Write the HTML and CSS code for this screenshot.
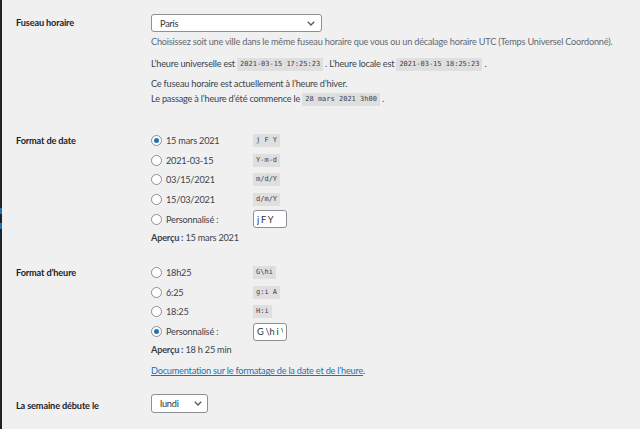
FILE: index.html
```html
<!DOCTYPE html>
<html lang="fr">
<head>
<meta charset="utf-8">
<title>Réglages généraux</title>
<link rel="stylesheet" href="styles.css">
</head>
<body>
<div class="page">
  <div class="menu-edge"><span class="cur cur-a"></span><span class="cur cur-b"></span></div>
  <form class="settings">
    <div class="row row-tz">
      <div class="th th-tz">Fuseau horaire</div>
      <div class="td">
        <div class="select select-tz"><span>Paris</span><svg class="chev" viewBox="0 0 8 5" width="8" height="5"><path d="M0.8 0.8 L4 4 L7.2 0.8" /></svg></div>
        <p class="description d1">Choisissez soit une ville dans le même fuseau horaire que vous ou un décalage horaire UTC (Temps Universel Coordonné).</p>
        <p class="info i1">L’heure universelle est <code>2021-03-15 17:25:23</code>. L’heure locale est <code>2021-03-15 18:25:23</code>.</p>
        <p class="info i2">Ce fuseau horaire est actuellement à l’heure d’hiver.<br>Le passage à l’heure d’été commence le <code>28 mars 2021 3h00</code>.</p>
      </div>
    </div>

    <div class="row row-date">
      <div class="th th-opt">Format de date</div>
      <div class="td">
        <div class="opt"><span class="radio checked"></span><span class="opt-text">15 mars 2021</span><code>j F Y</code></div>
        <div class="opt"><span class="radio"></span><span class="opt-text">2021-03-15</span><code>Y-m-d</code></div>
        <div class="opt"><span class="radio"></span><span class="opt-text">03/15/2021</span><code>m/d/Y</code></div>
        <div class="opt"><span class="radio"></span><span class="opt-text">15/03/2021</span><code>d/m/Y</code></div>
        <div class="opt"><span class="radio"></span><span class="opt-text">Personnalisé :</span><input class="custom" type="text" value="j F Y"></div>
        <div class="preview"><strong>Aperçu :</strong> 15 mars 2021</div>
      </div>
    </div>

    <div class="row row-time">
      <div class="th th-opt">Format d’heure</div>
      <div class="td">
        <div class="opt"><span class="radio"></span><span class="opt-text">18h25</span><code>G\hi</code></div>
        <div class="opt"><span class="radio"></span><span class="opt-text">6:25</span><code>g:i A</code></div>
        <div class="opt"><span class="radio"></span><span class="opt-text">18:25</span><code>H:i</code></div>
        <div class="opt"><span class="radio checked"></span><span class="opt-text">Personnalisé :</span><input class="custom" type="text" value="G \h i \m\i\n"></div>
        <div class="preview"><strong>Aperçu :</strong> 18 h 25 min</div>
        <p class="doc"><a href="#">Documentation sur le formatage de la date et de l’heure</a>.</p>
      </div>
    </div>

    <div class="row row-week">
      <div class="th th-week">La semaine débute le</div>
      <div class="td">
        <div class="select select-week"><span>lundi</span><svg class="chev" viewBox="0 0 8 5" width="8" height="5"><path d="M0.8 0.8 L4 4 L7.2 0.8" /></svg></div>
      </div>
    </div>
  </form>
</div>
</body>
</html>
```

FILE: styles.css
```css
* { box-sizing: border-box; }

html, body {
  margin: 0;
  padding: 0;
  background: #f0f0f1;
}

body {
  font-family: Lato, "Noto Sans", sans-serif;
  font-size: 9.2px;
  letter-spacing: -0.22px;
  color: #3c434a;
}

.page {
  display: flex;
  min-height: 429px;
}

/* edge of the admin menu on the left */
.menu-edge {
  position: relative;
  width: 2px;
  flex: 0 0 2px;
  background: #1d2327;
}
.cur {
  position: absolute;
  left: 0;
  width: 2px;
  height: 6px;
  background: #2271b1;
}
.cur-a { top: 208px; }
.cur-b { top: 223px; }

.settings {
  flex: 1;
  padding-left: 14px;
}

.row {
  display: grid;
  grid-template-columns: 135px 1fr;
}

.th {
  font-size: 9.2px;
  font-weight: 700;
  letter-spacing: -0.15px;
  color: #1d2327;
}

p { margin: 0; }

/* time zone */
.row-tz { margin-top: 14px; }
.th-tz { line-height: 18px; }

.select {
  display: flex;
  align-items: center;
  justify-content: space-between;
  background: #fff;
  border: 1px solid #8c8f94;
  border-radius: 3px;
  color: #2c3338;
}
.select-tz {
  width: 171px;
  height: 18px;
  padding: 0 6px 0 8px;
}
.select-week {
  width: 57px;
  height: 19px;
  padding: 0 5px 0 8px;
}
.chev {
  fill: none;
  stroke: #50575e;
  stroke-width: 1.3;
}

.description,
.info {
  line-height: 14.5px;
}
.description { color: #646970; margin-top: 3px; }
.i1 { margin-top: 7.5px; }
.i2 { margin-top: 5.5px; }

code {
  font-family: "DejaVu Sans Mono", "Liberation Mono", monospace;
  font-size: 7px;
  line-height: 9px;
  letter-spacing: 0;
  background: rgba(0, 0, 0, 0.07);
  color: #3c434a;
  padding: 2px 3px;
  display: inline-block;
  vertical-align: middle;
  margin-right: 2px;
}

/* date and time formats */
.row-date { margin-top: 25px; }
.row-time { margin-top: 16px; }
.th-opt { line-height: 19.6px; }

.opt {
  display: flex;
  align-items: center;
  height: 19.6px;
}
.radio {
  width: 11px;
  height: 11px;
  flex: 0 0 11px;
  border: 1px solid #8c8f94;
  border-radius: 50%;
  background: #fff;
  margin-right: 4px;
  display: flex;
  align-items: center;
  justify-content: center;
}
.radio.checked::after {
  content: "";
  width: 5px;
  height: 5px;
  border-radius: 50%;
  background: #2271b1;
}
.opt-text {
  width: 87px;
  flex: 0 0 87px;
}
.opt code { margin-right: 0; }

.custom {
  width: 34px;
  height: 18px;
  border: 1px solid #8c8f94;
  border-radius: 3px;
  background: #fff;
  font-family: inherit;
  font-size: 9.2px;
  letter-spacing: -0.22px;
  color: #2c3338;
  padding: 0 3px;
  margin: 0;
  outline: none;
}

.preview {
  height: 18px;
  line-height: 18px;
  color: #3c434a;
}
.preview strong { font-weight: 700; }

.doc {
  margin-top: 5px;
  line-height: 14.5px;
}
.doc a { color: #2271b1; text-decoration: underline; }

/* first day of the week */
.row-week { margin-top: 15.5px; }
.th-week { line-height: 19px; padding-top: 2px; }
```
